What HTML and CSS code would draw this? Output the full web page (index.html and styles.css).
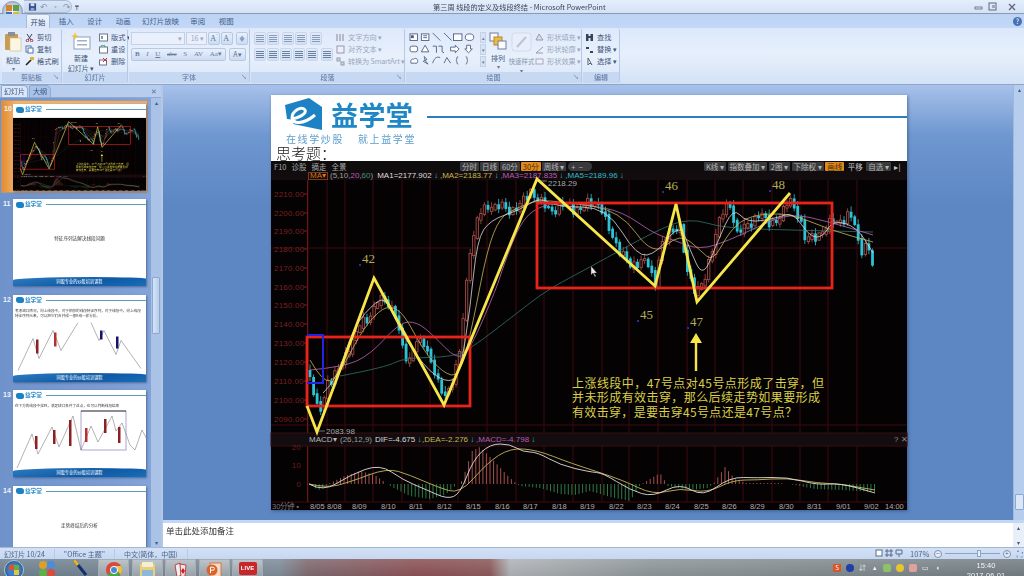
FILE: index.html
```html
<!DOCTYPE html>
<html lang="zh-CN">
<head>
  <meta charset="UTF-8" />
  <title>第三周 线段的定义及线段终结 - Microsoft PowerPoint</title>
  <link rel="stylesheet" href="styles.css">
</head>
<body>
  <div class="app">
    <!-- title bar -->
    <div class="titlebar">
      <div class="qat">
        <svg width="10" height="10" viewBox="0 0 10 10"><rect x="1" y="1" width="8" height="8" fill="#35508c"/><rect x="3" y="1" width="4" height="3" fill="#d8e4f4"/><rect x="3" y="6" width="4" height="3" fill="#8fa6cc"/></svg>
        <span class="qat-undo">↶</span><span class="qat-sep">·</span><span class="qat-undo">↷</span>
      </div>
      <span class="qat-more">₸</span>
      <div class="title-text">第三周 线段的定义及线段终结 - Microsoft PowerPoint</div>
      <div class="win-btns">
        <svg width="46" height="10" viewBox="0 0 46 10"><rect x="1" y="5" width="7" height="2" fill="none" stroke="#667" stroke-width=".8"/><rect x="15" y="1" width="7" height="7" fill="none" stroke="#667"/><rect x="18" y="3" width="3" height="3" fill="#9ab"/><path d="M35 2l6 6M41 2l-6 6" stroke="#667" stroke-width="1.4"/></svg>
      </div>
    </div>
    <div class="office-btn">
      <svg width="15" height="15" viewBox="0 0 15 15"><rect x="1" y="1" width="6" height="6" fill="#d9822b"/><rect x="8" y="1" width="6" height="6" fill="#5ca14a"/><rect x="1" y="8" width="6" height="6" fill="#3f73b8"/><rect x="8" y="8" width="6" height="6" fill="#e0b93a"/></svg>
    </div>

    <!-- ribbon tabs -->
    <div class="tabs">
      <span class="tab tab-active">开始</span>
      <span class="tab">插入</span>
      <span class="tab">设计</span>
      <span class="tab">动画</span>
      <span class="tab tab-wide">幻灯片放映</span>
      <span class="tab">审阅</span>
      <span class="tab">视图</span>
      <span class="help">?</span>
    </div>

    <!-- ribbon -->
    <div class="ribbon">
      <div class="grp grp-clip">
        <div class="grp-body">
          <div class="big-btn">
            <svg width="18" height="20" viewBox="0 0 18 20"><rect x="1" y="2" width="13" height="16" rx="1" fill="#c89a52"/><rect x="4" y="0" width="7" height="4" fill="#8b8f98"/><rect x="6" y="6" width="11" height="13" fill="#fbf6e2" stroke="#c9b988" stroke-width=".6"/></svg>
            <span>粘贴</span><i>▾</i>
          </div>
          <div class="small-col">
            <span class="small-btn"><svg width="9" height="9" viewBox="0 0 9 9"><path d="M2 1l4 6M7 1L3 7" stroke="#345" fill="none"/><circle cx="2.4" cy="7.6" r="1.2" fill="none" stroke="#a33"/><circle cx="6.6" cy="7.6" r="1.2" fill="none" stroke="#a33"/></svg>剪切</span>
            <span class="small-btn"><svg width="9" height="9" viewBox="0 0 9 9"><rect x="1" y="1" width="5" height="6" fill="#fff" stroke="#57a"/><rect x="3" y="3" width="5" height="5" fill="#fff" stroke="#57a"/></svg>复制</span>
            <span class="small-btn"><svg width="9" height="9" viewBox="0 0 9 9"><path d="M1 8l5-5" stroke="#222" stroke-width="1.6"/><rect x="5" y="0" width="4" height="3" fill="#e3b23c"/></svg>格式刷</span>
          </div>
        </div>
        <div class="grp-label">剪贴板<em>↘</em></div>
      </div>

      <div class="grp grp-slide">
        <div class="grp-body">
          <div class="big-btn big-new">
            <svg width="20" height="18" viewBox="0 0 20 18"><rect x="3" y="5" width="16" height="12" fill="#fff" stroke="#8aa0bf"/><rect x="6" y="8" width="10" height="1.5" fill="#9fb1c9"/><rect x="6" y="12" width="10" height="1.5" fill="#9fb1c9"/><path d="M4 0l1 3 3 1-3 1-1 3-1-3-3-1 3-1z" fill="#eec43a"/></svg>
            <span>新建<br>幻灯片 ▾</span>
          </div>
          <div class="small-col">
            <span class="small-btn"><svg width="9" height="9" viewBox="0 0 9 9"><rect x=".5" y="1" width="8" height="7" fill="#fff" stroke="#678"/><rect x="2" y="3" width="2" height="3" fill="#89a"/></svg>版式 ▾</span>
            <span class="small-btn"><svg width="9" height="9" viewBox="0 0 9 9"><rect x=".5" y="2" width="8" height="6" fill="#fff" stroke="#678"/><path d="M2 2a2 2 0 014 0" stroke="#397" fill="none"/></svg>重设</span>
            <span class="small-btn"><svg width="9" height="9" viewBox="0 0 9 9"><rect x=".5" y="3" width="7" height="5" fill="#fff" stroke="#678"/><path d="M4 1l4 4M8 1L4 5" stroke="#c33"/></svg>删除</span>
          </div>
        </div>
        <div class="grp-label">幻灯片</div>
      </div>

      <div class="grp grp-font">
        <div class="grp-body grp-stack">
          <div class="tool-row">
            <span class="combo combo-name">▾</span><span class="combo combo-size">16 ▾</span>
            <span class="chip chip-serif">A<sup>ˆ</sup></span><span class="chip chip-serif">A<sup>ˇ</sup></span>
            <span class="chip chip-pen">♦</span>
          </div>
          <div class="tool-row">
            <span class="strip strip-font"><b>B</b><i>I</i><u>U</u><s>abc</s><span>S</span><span>AV</span><span>Aa▾</span></span>
            <span class="chip chip-color">A▾</span>
          </div>
        </div>
        <div class="grp-label">字体<em>↘</em></div>
      </div>

      <div class="grp grp-para">
        <div class="grp-body para-body">
          <div class="grp-stack">
            <div class="tool-row">
              <span class="chip chip-lines"></span><span class="chip chip-lines"></span>
              <span class="chip chip-lines chip-gap"></span><span class="chip chip-lines"></span>
              <span class="chip chip-lines chip-gap"></span>
            </div>
            <div class="tool-row">
              <span class="chip chip-lines chip-dark"></span><span class="chip chip-lines chip-dark"></span><span class="chip chip-lines chip-dark"></span><span class="chip chip-lines chip-dark"></span><span class="chip chip-lines chip-dark"></span>
              <span class="chip chip-lines chip-dark chip-gap"></span>
            </div>
          </div>
          <div class="small-col small-grey">
            <span class="small-btn"><svg width="9" height="9" viewBox="0 0 9 9"><path d="M1 1v7M4 1v7M7 1v7" stroke="#889" /></svg>文字方向 ▾</span>
            <span class="small-btn"><svg width="9" height="9" viewBox="0 0 9 9"><rect x="1" y="1" width="7" height="7" fill="#eef" stroke="#99a"/></svg>对齐文本 ▾</span>
            <span class="small-btn small-tight"><svg width="9" height="9" viewBox="0 0 9 9"><rect x="1" y="1" width="3" height="3" fill="#cdd" stroke="#99a"/><rect x="5" y="5" width="3" height="3" fill="#cdd" stroke="#99a"/></svg>转换为 SmartArt ▾</span>
          </div>
        </div>
        <div class="grp-label">段落<em>↘</em></div>
      </div>

      <div class="grp grp-draw">
        <div class="grp-body draw-body">
          <svg class="shapes" width="70" height="34" viewBox="0 0 74 36" fill="#fdfdff" stroke="#46587a" stroke-width=".9">
            <rect x="1" y="2" width="8" height="7"/><rect x="2.5" y="4" width="2" height="2" fill="#46587a"/>
            <rect x="13" y="2" width="8" height="7"/><path d="M15 4h4M15 6h4"/>
            <path d="M25 1l8 8M37 1l8 8" fill="none"/><rect x="47" y="2" width="9" height="7"/><ellipse cx="64" cy="5.5" rx="4.5" ry="3.5"/>
            <rect x="1" y="15" width="8" height="6" rx="2"/><path d="M17 14l4 7h-8z"/><path d="M25 15h4v7M31 15h4v6l2 1" fill="none"/>
            <path d="M44 16h5v-2l4 4-4 4v-2h-5z"/><path d="M61 14h4v4h2l-4 4-4-4h2z"/>
            <path d="M2 33c-1-4 2-5 3-4 1-2 4-1 4 1 1 2-1 4-3 3z"/><path d="M16 26l3 3-2 1 3 4-5-3 2-1z" /><path d="M25 33c2-6 4-7 8-6M37 33l3-6 4 6" fill="none"/><path d="M52 26c-2 0-1 3-2 4 1 1 0 4 2 4M60 26c2 0 1 3 2 4-1 1 0 4-2 4" fill="none"/>
          </svg>
          <div class="gallery-arrows"><i>▴</i><i>▾</i><i>▾</i></div>
          <div class="big-btn big-arrange">
            <svg width="18" height="18" viewBox="0 0 18 18"><rect x="1" y="1" width="8" height="8" fill="#fbfbff" stroke="#6f7f99"/><rect x="5" y="5" width="8" height="8" fill="#eebb3f" stroke="#b28a2a"/><rect x="9" y="9" width="8" height="8" fill="#fbfbff" stroke="#6f7f99"/></svg>
            <span>排列</span><i>▾</i>
          </div>
          <div class="big-btn big-quick">
            <svg width="22" height="20" viewBox="0 0 22 20"><rect x="1" y="1" width="19" height="18" rx="3" fill="#e8eefa" stroke="#d2dbeb"/><path d="M6 15L15 5" stroke="#b8c4d8" stroke-width="2"/></svg>
            <span>快速样式</span><i>▾</i>
          </div>
          <div class="small-col small-grey">
            <span class="small-btn"><svg width="9" height="9" viewBox="0 0 9 9"><path d="M1 7l3-6 4 6z" fill="#dde" stroke="#99a"/></svg>形状填充 ▾</span>
            <span class="small-btn"><svg width="9" height="9" viewBox="0 0 9 9"><path d="M1 8L8 2M1 8h7" stroke="#99a" fill="none"/></svg>形状轮廓 ▾</span>
            <span class="small-btn"><svg width="9" height="9" viewBox="0 0 9 9"><rect x="1" y="2" width="7" height="5" fill="#eef" stroke="#aab"/></svg>形状效果 ▾</span>
          </div>
        </div>
        <div class="grp-label">绘图<em>↘</em></div>
      </div>

      <div class="grp grp-edit">
        <div class="grp-body">
          <div class="small-col">
            <span class="small-btn"><svg width="9" height="9" viewBox="0 0 9 9"><rect x="1" y="1" width="2.5" height="7" fill="#345"/><rect x="5.5" y="1" width="2.5" height="7" fill="#345"/><rect x="3" y="3" width="3" height="2" fill="#345"/></svg>查找</span>
            <span class="small-btn"><svg width="9" height="9" viewBox="0 0 9 9"><path d="M1 3h3M5 7h3" stroke="#345" stroke-width="2"/></svg>替换 ▾</span>
            <span class="small-btn"><svg width="9" height="9" viewBox="0 0 9 9"><path d="M3 1v7l2-2 2 2z" fill="#fff" stroke="#567"/></svg>选择 ▾</span>
          </div>
        </div>
        <div class="grp-label">编辑</div>
      </div>
      <div class="grp-rest"></div>
    </div>

    <!-- slide panel + stage -->
    <div class="workspace">
      <div class="side">
        <div class="side-tabs">
          <span class="side-tab side-tab-on">幻灯片</span>
          <span class="side-tab">大纲</span>
          <span class="side-close">✕</span>
        </div>
        <div class="side-body">
          <div class="thumbs">
            <div class="thumb-row thumb-on">
              <span class="thumb-no">10</span>
              <div class="thumb">
                <svg class="thumb-art" viewBox="271 95 636 415">
                  <rect x="271" y="161" width="636" height="349" fill="#050203"/>
                  <use href="#chart-art"/>
                </svg>
                <div class="mini-head"><span class="mini-mark"></span><span class="mini-name">益学堂</span><span class="mini-line"></span></div>
              </div>
            </div>
            <div class="thumb-row">
              <span class="thumb-no">11</span>
              <div class="thumb">
                <div class="mini-head"><span class="mini-mark"></span><span class="mini-name">益学堂</span><span class="mini-line"></span></div>
                <div class="mini-center">特征序列法解决线段问题</div>
                <div class="mini-foot">同股专业的炒股培训课程</div>
              </div>
            </div>
            <div class="thumb-row">
              <span class="thumb-no">12</span>
              <div class="thumb">
                <div class="mini-head"><span class="mini-mark"></span><span class="mini-name">益学堂</span><span class="mini-line"></span></div>
                <div class="mini-text">考虑缺口情况，向上线段中，对于相邻的线段特征序列，对于线段中，向上线段特征序列元素，可以把它们合并成一根K线一样分析。</div>
                <svg class="mini-draw" viewBox="0 0 133 50" fill="none" stroke="#666" stroke-width=".5">
                  <path d="M5 50L20 18l6 20 14-28 8 20 17-28"/>
                  <path d="M78 2l8 18 5-10 12 24 5-14 20 28"/>
                  <rect x="23" y="19" width="2.5" height="14" fill="#8e2020" stroke="none"/>
                  <rect x="41" y="12" width="2.5" height="14" fill="#b73030" stroke="none"/>
                  <rect x="87" y="10" width="2.5" height="9" fill="#141470" stroke="none"/>
                  <rect x="103" y="16" width="2.5" height="12" fill="#141470" stroke="none"/>
                </svg>
                <div class="mini-foot">同股专业的炒股培训课程</div>
              </div>
            </div>
            <div class="thumb-row">
              <span class="thumb-no">13</span>
              <div class="thumb">
                <div class="mini-head"><span class="mini-mark"></span><span class="mini-name">益学堂</span><span class="mini-line"></span></div>
                <div class="mini-text">在下方的线段中找到，满足缺口条件了这点，也可以判断线段结束</div>
                <svg class="mini-draw" viewBox="0 0 133 60" fill="none" stroke="#666" stroke-width=".5">
                  <path d="M4 60L19 26l6 20 14-27 7 20 14-31 8 34 10-24 7 16 14-26 4 15 6-8 8 22 5 5 7-20 15 28"/>
                  <rect x="22" y="28" width="2.5" height="13" fill="#8e2020" stroke="none"/>
                  <rect x="40" y="22" width="2.5" height="14" fill="#8e2020" stroke="none"/>
                  <rect x="56" y="12" width="2.5" height="26" fill="#8e2020" stroke="none"/>
                  <rect x="72" y="20" width="2.5" height="14" fill="#b73030" stroke="none"/>
                  <rect x="91" y="11" width="2.5" height="14" fill="#8e2020" stroke="none"/>
                  <rect x="105" y="19" width="2.5" height="16" fill="#8e2020" stroke="none"/>
                  <rect x="68" y="3" width="45" height="39" stroke="#7468b0" stroke-width=".6"/>
                  <path d="M68 3h45" stroke="#222" stroke-width=".8"/>
                </svg>
                <div class="mini-foot">同股专业的炒股培训课程</div>
              </div>
            </div>
            <div class="thumb-row">
              <span class="thumb-no">14</span>
              <div class="thumb">
                <div class="mini-head"><span class="mini-mark"></span><span class="mini-name">益学堂</span><span class="mini-line"></span></div>
                <div class="mini-center">走势终结后的分析</div>
              </div>
            </div>
          </div>
          <div class="vscroll side-scroll">
            <span class="sb-arrow">▴</span>
            <span class="sb-thumb"></span>
            <span class="sb-arrow">▾</span>
          </div>
        </div>
      </div>

      <div class="main">
        <div class="stage-row">
          <div class="stage">
            <div class="slide">
              <div class="slide-head">
                <div class="brand">
                  <div class="brand-top">
                    <svg class="brand-mark" width="38" height="33" viewBox="0 0 38 33">
                      <path d="M0 7L24 0 37 9V32L8 26 11 22 2 21z" fill="#1d82c4"/>
                      <path d="M7 21C13 20 22 16 20 12 17 7 7 13 7 20 7 26 18 27 30 17" fill="none" stroke="#fff" stroke-width="3"/>
                    </svg>
                    <span class="brand-name">益学堂</span>
                  </div>
                  <div class="brand-tag">在线学炒股<span class="brand-gap"></span>就上益学堂</div>
                </div>
                <div class="brand-line"></div>
                <div class="slide-q">思考题：</div>
              </div>
              <div class="chart">
                <div class="chart-bar">
                  <div class="bar-left"><span>F10</span><span>诊股</span><span>摘走</span><span>全景</span></div>
                  <div class="bar-mid">
                    <span class="pill">分时</span><span class="pill">日线</span><span class="pill">60分</span><span class="pill pill-on">30分</span><span class="pill">周线 ▾</span><span class="pill pill-round">+ &nbsp;−</span>
                  </div>
                  <div class="bar-right">
                    <span class="pill">K线 ▾</span><span class="pill">指数叠加 ▾</span><span class="pill">2图 ▾</span><span class="pill">下除权 ▾</span><span class="pill pill-on">画线</span><span class="pill pill-plain">平移</span><span class="pill">自选 ▾</span><span class="pill pill-plain">▸|</span>
                  </div>
                </div>
                <div class="chart-legend">
                  <span class="ma-tag">MA▾</span>
                  <span class="lg-grey">(5,10,<b class="lg-pink">20</b>,<b class="lg-green">60</b>)</span>
                  <span class="lg-white">MA1=2177.902 <b class="lg-cyan">↓</b></span>
                  <span class="lg-yellow">,MA2=2183.77 <b class="lg-cyan">↓</b></span>
                  <span class="lg-pink">,MA3=2187.835 <b class="lg-cyan">↓</b></span>
                  <span class="lg-cyan">,MA5=2189.96 ↓</span>
                </div>
                <svg class="chart-svg" width="636" height="330" viewBox="271 180 636 330">
                  <g id="chart-art"></g>
                </svg>
              </div>
            </div>
          </div>
          <div class="vscroll main-scroll">
            <span class="sb-arrow">▴</span>
            <span class="sb-thumb sb-thumb-main"></span>
          </div>
        </div>
        <div class="notes-row">
          <div class="notes">单击此处添加备注</div>
          <div class="vscroll notes-scroll"><span class="sb-arrow">▴</span><span class="sb-arrow">▾</span></div>
        </div>
      </div>
    </div>

    <!-- status bar -->
    <div class="statusbar">
      <span class="st-cell">幻灯片 10/24</span>
      <span class="st-cell st-theme">"Office 主题"</span>
      <span class="st-cell">中文(简体，中国)</span>
      <div class="st-right">
        <span class="view-btns">
          <svg width="28" height="9" viewBox="0 0 28 9" fill="none" stroke="#5a6c8c"><rect x="1" y="1" width="6" height="6" fill="#fff"/><path d="M11 1h2v2h-2zM15 1h2v2h-2zM11 5h2v2h-2zM15 5h2v2h-2z"/><path d="M21 1h6v4h-6zM24 5v3"/></svg>
        </span>
        <span class="st-zoom">107%</span>
        <span class="zoom-circle">−</span>
        <span class="zoom-track"><i></i></span>
        <span class="zoom-circle">+</span>
        <span class="st-fit">⛶</span>
      </div>
    </div>

    <!-- taskbar -->
    <div class="taskbar">
      <span class="start-orb"><i></i></span>
      <svg class="tb-app" width="20" height="18" viewBox="0 0 20 18"><circle cx="6" cy="5" r="4" fill="#d9a02d"/><circle cx="14" cy="5" r="4" fill="#4b8dd8"/><circle cx="6" cy="13" r="4" fill="#5fb04b"/><circle cx="14" cy="13" r="4" fill="#d84b3f"/></svg>
      <svg class="tb-app tb-pen" width="18" height="18" viewBox="0 0 18 18"><path d="M2 0l12 15" stroke="#15306f" stroke-width="3"/><path d="M2 0l4 5" stroke="#e2b52d" stroke-width="3"/></svg>
      <span class="tb-btn"><svg width="16" height="16" viewBox="0 0 16 16"><circle cx="8" cy="8" r="8" fill="#d8493c"/><path d="M8 8L1.5 12.5A8 8 0 008 16z" fill="#4ca64a"/><path d="M8 8l6.5 4.5A8 8 0 0016 8 8 8 0 0015 4H8z" fill="#edc23c"/><path d="M8 16l6.5-3.5L11 8H5z" fill="#4ca64a"/><circle cx="8" cy="8" r="3.6" fill="#4b86d8" stroke="#fff"/></svg></span>
      <span class="tb-btn"><svg width="17" height="16" viewBox="0 0 17 16"><rect x="1" y="2" width="15" height="14" fill="#e8cf7c"/><rect x="3" y="0" width="11" height="5" fill="#f5efd2"/><rect x="3" y="8" width="11" height="6" fill="#8fb7d6"/></svg></span>
      <span class="tb-btn"><svg width="16" height="16" viewBox="0 0 16 16"><path d="M2 3l5-2 2 12-5 2z" fill="#eee" stroke="#b44"/><path d="M7 2l6 1-1 11-4 1z" fill="#f4e6e6" stroke="#b44"/><path d="M10 6l2 3-2 3-2-3z" fill="#c22"/></svg></span>
      <span class="tb-btn"><svg width="16" height="16" viewBox="0 0 16 16"><rect x="4" y="1" width="11" height="14" fill="#f6d9c4" stroke="#d07a48"/><circle cx="6" cy="8" r="5.5" fill="#d9652c"/><path d="M4.500 11V5.200h2.400a1.400 1.400 0 010 3H4.500" stroke="#fff" fill="none"/></svg></span>
      <span class="tb-btn"><span class="live-ico">LIVE</span></span>
      <div class="tray">
        <span class="tray-s">S</span>
        <span class="tray-dot"></span>
        <span class="tray-mini">⇵</span>
        <span class="tray-mini">▴</span>
        <span class="tray-sq tray-green"></span>
        <span class="tray-sq tray-yellow"></span>
        <span class="tray-sq tray-red"></span>
        <span class="tray-mini">▭</span>
        <span class="tray-mini">◖</span>
        <span class="clock">15:40<br>2017-06-01</span>
      </div>
    </div>
  </div>
  <script src="chart.js"></script>
</body>
</html>
```

FILE: styles.css
```css
* {
  box-sizing: border-box;
}
html, body {
  margin: 0;
  padding: 0;
  width: 1024px;
  height: 576px;
  overflow: hidden;
}
body {
  font-family: "Noto Sans CJK SC", "Liberation Sans", sans-serif;
  font-size: 8px;
  color: #3d5478;
}
.app {
  position: relative;
  width: 1024px;
  height: 576px;
  display: flex;
  flex-direction: column;
  filter: blur(0.45px);
}

/* title bar */
.titlebar {
  height: 14px;
  flex: none;
  display: flex;
  align-items: center;
  background: linear-gradient(#e4eefc, #d3e2f8);
  border-bottom: 1px solid #8c9bab;
  position: relative;
  padding-left: 24px;
}
.qat {
  width: 48px;
  height: 13px;
  display: flex;
  align-items: center;
  gap: 3px;
  padding-left: 4px;
  background: linear-gradient(#dbe7f8, #c6d7ef);
  border: 1px solid #a9bbd4;
  border-left: none;
  border-radius: 0 8px 8px 0;
  color: #8796ad;
  font-size: 9px;
}
.qat-sep {
  color: #a6b2c4;
}
.qat-more {
  margin-left: 3px;
  font-size: 7px;
  color: #445;
}
.title-text {
  position: absolute;
  left: 433px;
  top: 1px;
  font-size: 7.2px;
  line-height: 12px;
  color: #3c4350;
  white-space: nowrap;
}
.win-btns {
  margin-left: auto;
  margin-right: 4px;
  display: flex;
}
.office-btn {
  position: absolute;
  left: 2px;
  top: 1px;
  width: 21px;
  height: 21px;
  border-radius: 50%;
  background: radial-gradient(#f4f7fc, #aebed6 70%, #7d8fa9);
  border: 1px solid #8898b0;
  display: flex;
  align-items: center;
  justify-content: center;
}

/* tabs */
.tabs {
  height: 14px;
  flex: none;
  display: flex;
  align-items: flex-end;
  padding-left: 26px;
  background: linear-gradient(#bcd3f4, #c3d8f7);
  position: relative;
}
.tab {
  width: 28.5px;
  height: 14px;
  line-height: 13px;
  text-align: center;
  font-size: 7.4px;
  color: #3f5a85;
}
.tab-active {
  width: 24px;
  margin-right: 2px;
  background: linear-gradient(#eef4fd, #dbe7f9);
  border: 1px solid #a8bcd8;
  border-bottom: none;
  border-radius: 2px 2px 0 0;
  color: #30486e;
}
.tab-wide {
  width: 46px;
}
.help {
  position: absolute;
  right: 2px;
  top: 3px;
  width: 9px;
  height: 9px;
  border-radius: 50%;
  background: #4572b4;
  color: #fff;
  font-size: 7px;
  line-height: 9px;
  text-align: center;
}

/* ribbon */
.ribbon {
  height: 57px;
  flex: none;
  display: flex;
  gap: 1px;
  padding: 1px 2px 1px 2px;
  background: linear-gradient(#dbe8fb, #e7effc 45%, #d4e2f6);
  border-bottom: 1px solid #8ea6c9;
}
.grp {
  display: flex;
  flex-direction: column;
  flex: none;
  border-right: 1px solid #b5c9e6;
  border-radius: 2px;
  background: linear-gradient(#dfe9fb, #e8f0fc 50%, #d8e5f8);
}
.grp-clip { width: 60px; }
.grp-slide { width: 65px; }
.grp-font { width: 121px; }
.grp-para { width: 154px; }
.grp-draw { width: 176px; }
.grp-edit { width: 37px; }
.grp-rest { flex: 1; }
.grp-body {
  flex: 1;
  display: flex;
  align-items: flex-start;
  gap: 3px;
  padding: 3px 2px 0;
  min-height: 0;
}
.grp-stack {
  flex-direction: column;
  gap: 3px;
  display: flex;
}
.grp-label {
  height: 11px;
  flex: none;
  position: relative;
  text-align: center;
  line-height: 10px;
  font-size: 7px;
  color: #58749c;
  background: #c6d8f2;
}
.grp-label em {
  position: absolute;
  right: 2px;
  top: 0;
  font-style: normal;
  font-size: 6px;
  color: #7d92b1;
}
.big-btn {
  display: flex;
  flex-direction: column;
  align-items: center;
  font-size: 7px;
  line-height: 10px;
  color: #3d5478;
  flex: none;
}
.big-btn span {
  margin-top: 3px;
  text-align: center;
}
.big-btn i {
  font-style: normal;
  font-size: 6px;
  line-height: 8px;
  color: #778;
}
.big-new {
  width: 30px;
  margin-left: 1px;
}
.small-col {
  display: flex;
  flex-direction: column;
  gap: 2.5px;
  padding-top: 1px;
}
.small-btn {
  display: flex;
  align-items: center;
  gap: 3px;
  height: 9.5px;
  font-size: 7.2px;
  line-height: 9px;
  white-space: nowrap;
  color: #3d5478;
}
.small-grey .small-btn {
  color: #99a7bb;
}
.small-tight {
  letter-spacing: -.15px;
}
.tool-row {
  display: flex;
  gap: 1px;
  height: 13px;
  align-items: stretch;
}
.combo {
  background: #eaf0fb;
  border: 1px solid #c3d2e8;
  font-size: 7px;
  line-height: 11px;
  text-align: right;
  padding-right: 2px;
  color: #9aa9bf;
}
.combo-name { width: 54px; }
.combo-size { width: 21px; }
.chip {
  min-width: 12px;
  background: linear-gradient(#e8f0fc, #cddcf3);
  border: 1px solid #b6c8e2;
  border-radius: 2px;
  font-size: 7px;
  line-height: 11px;
  text-align: center;
  color: #5d7190;
}
.chip-serif {
  font-family: "Liberation Serif", serif;
  font-size: 8px;
}
.chip-serif sup {
  font-size: 5px;
  line-height: 0;
}
.chip-pen {
  margin-left: 2px;
  color: #8aa0c0;
}
.chip-color {
  width: 17px;
  margin-left: 2px;
}
.strip {
  flex: 1;
  width: 95px;
  display: flex;
  justify-content: space-between;
  padding: 0 3px;
  background: linear-gradient(#e8f0fc, #cddcf3);
  border: 1px solid #b6c8e2;
  border-radius: 2px;
  font-family: "Liberation Serif", serif;
  font-size: 7px;
  line-height: 11px;
  color: #6a7d9a;
}
.para-body {
  gap: 3px;
  padding-left: 3px;
}
.chip-lines {
  width: 12px;
  background:
    repeating-linear-gradient(#8a9cb8 0 1px, transparent 1px 2px) center / 8px 7px no-repeat,
    linear-gradient(#e2ebfa, #d2dff4);
  border-color: #c7d6ec;
}
.chip-gap {
  margin-left: 2px;
}
.chip-dark {
  background:
    repeating-linear-gradient(#6b7f9e 0 1px, transparent 1px 2px) center / 8px 7px no-repeat,
    linear-gradient(#e2ebfa, #d2dff4);
}
.draw-body {
  gap: 1px;
}
.shapes {
  flex: none;
  margin-left: 1px;
}
.gallery-arrows {
  width: 6px;
  flex: none;
  display: flex;
  flex-direction: column;
  gap: 1px;
}
.gallery-arrows i {
  height: 11px;
  font-style: normal;
  font-size: 5px;
  line-height: 9px;
  text-align: center;
  color: #778;
  background: #d6e2f6;
  border: 1px solid #c3d2e8;
}
.big-arrange {
  width: 20px;
  margin-left: 1px;
  color: #44597c;
}
.big-quick {
  width: 25px;
  font-size: 6.4px;
  color: #8896ab;
  white-space: nowrap;
}
.big-quick span {
  margin-top: 5px;
}

/* slide panel */
.workspace {
  height: 462px;
  flex: none;
  display: flex;
  background: linear-gradient(#a7c1ea, #6f97d0 50px, #5c87c3 120px);
}
.side {
  width: 163px;
  flex: none;
  display: flex;
  flex-direction: column;
  border-right: 2px solid #b4c8e6;
}
.side-tabs {
  height: 13px;
  flex: none;
  display: flex;
  align-items: flex-end;
  padding-left: 1px;
  background: #b8cdee;
  border-bottom: 1px solid #8fa9d2;
  position: relative;
}
.side-tab {
  width: 22px;
  height: 12px;
  line-height: 11px;
  font-size: 7px;
  text-align: center;
  color: #35507c;
  background: #a9c2e8;
  border: 1px solid #8fa9d2;
  border-bottom: none;
  border-radius: 2px 5px 0 0;
}
.side-tab-on {
  width: 27px;
  margin-right: 1px;
  background: #dce8fa;
}
.side-close {
  position: absolute;
  right: 4px;
  top: 2px;
  font-size: 7px;
  line-height: 9px;
  color: #5b6f90;
}
.side-body {
  flex: 1;
  display: flex;
  min-height: 0;
  background: linear-gradient(90deg, #6f92ca, #7c9ed5 70%, #85a6da);
}
.thumbs {
  flex: 1;
  min-width: 0;
  display: flex;
  flex-direction: column;
  gap: 4px;
  padding: 2px 0 0 1px;
  overflow: hidden;
}
.thumb-row {
  display: flex;
  align-items: flex-start;
  flex: none;
  padding: 3px 2px 2px 1px;
  height: 92px;
}
.thumb-row:nth-child(2) { margin-top: -1px; }
.thumb-row:nth-child(3), .thumb-row:nth-child(4), .thumb-row:nth-child(5) { margin-top: -.5px; }
.thumb-on {
  height: 93px;
  width: 147px;
  background: linear-gradient(90deg, #e58c2e, #f0b474 10%, #d9b08a);
  border: 1px solid #b79876;
}
.thumb-no {
  width: 11px;
  flex: none;
  font-size: 7px;
  font-weight: bold;
  line-height: 10px;
  color: #eef3fb;
  text-align: left;
  padding-left: 1px;
  font-family: "Liberation Sans", sans-serif;
}
.thumb-on .thumb-no {
  width: 10px;
}
.thumb {
  position: relative;
  width: 133px;
  height: 87px;
  flex: none;
  background: #fff;
  display: flex;
  flex-direction: column;
  box-shadow: 1px 1px 2px rgba(30, 50, 90, .5);
  overflow: hidden;
}
.thumb-art {
  position: absolute;
  inset: 0;
  width: 133px;
  height: 87px;
}
.mini-head {
  position: relative;
  height: 13px;
  flex: none;
  display: flex;
  align-items: center;
  padding: 0 0 2px 3px;
  gap: 1px;
}
.mini-mark {
  width: 8px;
  height: 6px;
  border-radius: 2px 3px;
  background: #1d82c4;
}
.mini-name {
  font-size: 5.6px;
  line-height: 7px;
  font-weight: bold;
  color: #2a8aca;
}
.mini-line {
  flex: 1;
  height: 1px;
  margin-left: 3px;
  background: #5f9cb8;
}
.mini-center {
  flex: 1;
  text-align: center;
  font-size: 4.6px;
  line-height: 52px;
  color: #333;
}
.mini-foot {
  height: 9px;
  flex: none;
  margin-top: auto;
  text-align: center;
  font-size: 4.2px;
  line-height: 9px;
  color: #fff;
  background: linear-gradient(170deg, #2e7cbf, #0e5aa6 60%, #1a6eb8);
  border-radius: 60% 40% 0 0 / 35% 20% 0 0;
}
.mini-text {
  flex: none;
  padding: 0 2px;
  font-size: 3.6px;
  line-height: 5px;
  color: #444;
}
.mini-draw {
  flex: 1;
  min-height: 0;
  width: 133px;
}
.vscroll {
  flex: none;
  display: flex;
  flex-direction: column;
  justify-content: space-between;
  background: #a9c2e6;
}
.side-scroll {
  width: 10px;
  margin-right: 0;
  padding-top: 0;
}
.sb-arrow {
  height: 9px;
  font-size: 6px;
  line-height: 9px;
  text-align: center;
  color: #42597f;
}
.sb-thumb {
  width: 8px;
  height: 57px;
  margin: 170px 1px auto;
  background: linear-gradient(90deg, #d6e4f8, #b7cdea);
  border: 1px solid #8da8cf;
  border-radius: 1px;
}
.main {
  flex: 1;
  min-width: 0;
  display: flex;
  flex-direction: column;
}
.stage-row {
  height: 435px;
  flex: none;
  display: flex;
}
.stage {
  flex: 1;
  min-width: 0;
  display: flex;
  justify-content: center;
  padding-top: 10px;
  padding-left: 2px;
}
.main-scroll {
  width: 11px;
  background: #b6cdee;
  border-left: 1px solid #9fb7da;
}
.sb-thumb-main {
  width: 9px;
  height: 16px;
  margin: auto 1px 10px;
  background: #dbe7f8;
}

/* slide */
.slide {
  width: 636px;
  height: 415px;
  background: #fff;
  display: flex;
  flex-direction: column;
  box-shadow: 1px 1px 3px rgba(30, 50, 90, .5);
}
.slide-head {
  height: 66px;
  flex: none;
  position: relative;
  padding: 3px 0 0 14px;
}
.brand-top {
  display: flex;
  align-items: center;
  gap: 8px;
  height: 33px;
}
.brand-name {
  font-size: 27px;
  font-weight: bold;
  line-height: 33px;
  color: #1f87c6;
  letter-spacing: .4px;
}
.brand-tag {
  margin: 2px 0 0 1px;
  font-size: 10px;
  line-height: 12px;
  color: #5b9ccd;
  letter-spacing: 1.6px;
  white-space: nowrap;
}
.brand-gap {
  display: inline-block;
  width: 14px;
}
.brand-line {
  position: absolute;
  left: 156px;
  right: 0;
  top: 21px;
  height: 2px;
  background: #2c7fbe;
}
.slide-q {
  position: absolute;
  left: 5px;
  top: 50px;
  font-family: "Noto Sans CJK TC", "Liberation Sans", sans-serif;
  font-weight: 300;
  font-size: 15px;
  line-height: 15px;
  color: #222;
  white-space: nowrap;
}

/* chart */
.chart {
  flex: 1;
  min-height: 0;
  background: #050203;
  display: flex;
  flex-direction: column;
}
.chart-bar {
  height: 11px;
  flex: none;
  display: flex;
  align-items: center;
  background: #0f0c0e;
  font-size: 7.5px;
  line-height: 10px;
  color: #a8a8a8;
  white-space: nowrap;
}
.bar-left {
  display: flex;
  flex: none;
  gap: 5px;
  padding-left: 3px;
  width: 189px;
}
.bar-mid {
  display: flex;
  flex: none;
  gap: 1px;
  width: 244px;
}
.bar-right {
  display: flex;
  flex: none;
  gap: 1.5px;
}
.pill {
  padding: 0 2px;
  height: 9px;
  line-height: 9px;
  background: #3a3a3c;
  border-radius: 1px;
  color: #b5b5b5;
}
.pill-on {
  background: #e08a1e;
  color: #4a2a05;
}
.pill-round {
  border-radius: 5px;
  width: 24px;
  padding: 0 3px;
  margin-left: 1px;
}
.pill-plain {
  background: none;
  color: #c8c8c8;
}
.chart-legend {
  height: 8px;
  flex: none;
  display: flex;
  align-items: center;
  gap: 2px;
  padding-left: 37px;
  font-family: "Liberation Sans", sans-serif;
  font-size: 8px;
  line-height: 8px;
  white-space: nowrap;
  background: #120c0e;
}
.chart-legend b {
  font-weight: normal;
}
.ma-tag {
  color: #d6761c;
  border: 1px solid #7e3a12;
  padding: 0 1px;
  height: 8px;
  line-height: 6px;
}
.lg-grey { color: #9c9c9c; margin-right: 2px; }
.lg-white { color: #dcdcdc; }
.lg-yellow { color: #c9b84c; }
.lg-pink { color: #b95cb5; }
.lg-green { color: #3e8c78; }
.lg-cyan { color: #31bccb; }
.chart-svg {
  display: block;
  flex: none;
  overflow: visible;
}

/* notes */
.notes-row {
  height: 27px;
  flex: none;
  display: flex;
  padding-top: 3px;
  background: #c3d6f3;
}
.notes {
  flex: 1;
  background: #fff;
  padding: 1px 0 0 3px;
  font-size: 8.500px;
  line-height: 13px;
  color: #333;
}
.notes-scroll {
  width: 11px;
  background: #e8eff9;
}

/* status bar */
.statusbar {
  height: 12px;
  flex: none;
  display: flex;
  align-items: center;
  padding-left: 4px;
  background: linear-gradient(#d3e1f6, #c6d7f1);
  border-top: 1px solid #a3b6d4;
  font-size: 7px;
  color: #4e6488;
}
.st-cell {
  padding-right: 9px;
  margin-right: 9px;
  border-right: 1px solid #b8c9e2;
  line-height: 10px;
}
.st-cell:last-of-type {
  margin-right: 0;
}
.st-right {
  margin-left: auto;
  display: flex;
  align-items: center;
  height: 12px;
  padding-right: 1px;
  gap: 3px;
}
.view-btns {
  display: flex;
  width: 30px;
}
.st-zoom {
  width: 21px;
  margin-left: 2px;
  font-size: 7.5px;
}
.zoom-circle {
  width: 8px;
  height: 8px;
  border: 1px solid #7d90ad;
  border-radius: 50%;
  background: #e7eefa;
  line-height: 5px;
  text-align: center;
  font-size: 7px;
}
.zoom-track {
  position: relative;
  width: 55px;
  height: 1px;
  background: #8ea3c2;
}
.zoom-track i {
  position: absolute;
  left: 32px;
  top: -3px;
  width: 4px;
  height: 7px;
  background: #e9f0fb;
  border: 1px solid #8ea3c2;
}
.st-fit {
  margin-left: 3px;
  font-size: 8px;
  line-height: 10px;
  color: #55688a;
}

/* taskbar */
.taskbar {
  height: 17px;
  flex: none;
  display: flex;
  align-items: flex-start;
  overflow: hidden;
  padding-left: 4px;
  background:
    linear-gradient(rgba(255,255,255,.12), rgba(0,0,0,.05)),
    linear-gradient(90deg, #6f8290 0, #808d9a 280px, #7f6a70 308px, #8d5256 420px, #8c5a5c 490px, #b0b4b8 510px, #8f979a 650px, #747f84 1024px);
}
.start-orb {
  width: 20px;
  height: 20px;
  margin-top: 1px;
  border-radius: 50%;
  flex: none;
  display: flex;
  align-items: center;
  justify-content: center;
  background: radial-gradient(#6aa6dc, #2a5d9c 75%);
  border: 1px solid #a9c3dd;
}
.start-orb i {
  width: 10px;
  height: 10px;
  background: conic-gradient(#5fae4a 0 25%, #e9c33f 0 50%, #3f7fd0 0 75%, #d9532f 0);
}
.tb-app {
  flex: none;
  margin: 1px 0 0 13px;
}
.tb-pen {
  margin-left: 15px;
  margin-right: 8px;
}
.tb-btn {
  width: 31px;
  height: 17px;
  flex: none;
  margin-right: 2.500px;
  display: flex;
  justify-content: center;
  padding-top: 2px;
  background: linear-gradient(#bcc3c9, #98a1a8);
  border: 1px solid #a5adb4;
  border-bottom: none;
}
.live-ico {
  width: 18px;
  height: 13px;
  background: #c8262a;
  border-radius: 2px;
  color: #fff;
  font-family: "Liberation Sans", sans-serif;
  font-size: 6px;
  font-weight: bold;
  line-height: 13px;
  text-align: center;
}
.tray {
  margin-left: auto;
  display: flex;
  align-items: center;
  gap: 5px;
  height: 17px;
  padding-right: 12px;
}
.tray span {
  flex: none;
}
.tray-s {
  width: 8px;
  height: 8px;
  background: #d9562b;
  color: #fff;
  font-size: 6px;
  line-height: 8px;
  text-align: center;
}
.tray-dot {
  width: 8px;
  height: 8px;
  border-radius: 50%;
  background: #1f3fa8;
}
.tray-mini {
  width: 7px;
  font-size: 7px;
  line-height: 9px;
  color: #eef1f3;
  text-align: center;
}
.tray-sq {
  width: 8px;
  height: 8px;
  border-radius: 2px;
}
.tray-green { background: #8fc06a; }
.tray-yellow { background: #e6c62e; border-radius: 50%; }
.tray-red { background: #e1a0a0; }
.tray .clock {
  width: 52px;
  margin-left: 14px;
  margin-top: 7px;
  font-family: "Liberation Sans", sans-serif;
  font-size: 7.500px;
  line-height: 10px;
  color: #f2f4f5;
  text-align: center;
}
```

FILE: chart.js
```js
// kline chart, coordinates are page pixels so they can be read off the screenshot
const art = document.getElementById('chart-art');
let out = '';

const closes = [[310,375],[317,405],[322,410],[328,380],[340,368],[350,345],[360,325],[370,315],[378,300],[385,300],[395,310],[402,345],[408,365],[415,340],[425,345],[432,360],[440,390],[447,395],[455,370],[460,350],[465,300],[470,250],[475,230],[478,215],[490,205],[500,205],[510,210],[520,205],[530,190],[540,200],[550,210],[560,205],[570,205],[580,210],[590,200],[600,205],[610,230],[620,250],[630,265],[640,260],[650,265],[655,285],[660,250],[670,230],[680,225],[687,270],[695,290],[705,280],[712,250],[720,215],[730,205],[737,230],[750,225],[760,210],[770,225],[780,215],[790,200],[800,215],[805,240],[815,235],[825,230],[832,220],[840,220],[850,215],[856,225],[860,250],[865,245],[870,255],[875,270]];
const maWhite = [[323,393],[337,380],[353,327],[377,300],[387,300],[403,337],[430,373],[450,383],[460,373],[470,310],[477,240],[490,220],[520,210],[540,197],[557,207],[607,207],[637,257],[657,253],[680,223],[690,250],[703,278],[717,243],[733,207],[747,223],[777,218],[793,212],[810,237],[823,237],[833,220],[857,227],[873,253]];
const maYellow = [[310,360],[323,383],[337,378],[357,340],[370,320],[387,305],[403,312],[423,350],[443,373],[460,377],[473,323],[487,250],[500,217],[517,208],[537,200],[563,202],[620,210],[653,257],[680,233],[700,250],[713,262],[730,230],[750,215],[790,213],[830,230],[873,242]];
const maPink = [[310,370],[343,367],[370,355],[400,322],[417,322],[433,335],[457,360],[470,350],[497,287],[503,267],[520,223],[537,207],[563,202],[590,205],[623,212],[653,233],[673,240],[700,250],[730,240],[757,227],[790,213],[830,222],[873,235]];
const maGreen = [[340,376],[387,367],[403,358],[453,357],[473,347],[517,313],[547,290],[590,267],[657,230],[690,218],[723,228],[790,230],[873,232]];
const dif = [[309,484],[323,492],[350,475],[380,464],[403,480],[427,490],[447,499],[460,494],[473,460],[490,444],[510,444],[523,452],[537,452],[560,465],[590,472],[603,473],[630,490],[653,497],[680,483],[703,497],[730,477],[757,478],[787,477],[817,485],[840,483],[875,493]];
const dea = [[309,484],[327,488],[350,482],[387,468],[410,475],[437,487],[460,494],[487,463],[510,448],[537,450],[570,463],[623,480],[653,495],[680,488],[707,493],[733,480],[757,480],[787,478],[817,483],[840,484],[875,490]];
const macdBars = [[310,0],[314,-4],[320,-6],[330,1],[345,8],[360,13],[375,9],[386,1],[392,-3],[410,-12],[430,-15],[445,-11],[455,-2],[462,3],[472,33],[480,37],[495,22],[510,6],[516,1],[520,-2],[540,-4],[560,-10],[575,-11],[590,-7],[610,-13],[630,-17],[640,-1],[650,5],[660,11],[668,-2],[690,-6],[708,-4],[714,1],[725,17],[735,5],[745,1],[780,1],[795,-1],[815,-5],[840,-6],[875,-8]];

const vLines = [308,327,345,373,402,430,458,487,516,544,573,602,629,658,687,715,743,772,800,828,857];
const dates = [['8/05',310],['8/08',327],['8/09',352],['8/10',381],['8/11',409],['8/12',437],['8/15',466],['8/16',495],['8/17',523],['8/18',552],['8/19',580],['8/22',609],['8/23',637],['8/24',665],['8/25',694],['8/26',722],['8/29',750],['8/30',779],['8/31',807],['9/01',836],['9/02',864],['14:00',885]];
const prices = [[2210,194],[2200,213],[2190,231],[2180,249],[2170,268],[2160,287],[2150,305],[2140,324],[2130,343],[2120,362],[2110,381],[2100,400],[2090,419]];

function interp(points, x) {
  if (x <= points[0][0]) return points[0][1];
  for (let i = 1; i < points.length; i++) {
    if (x <= points[i][0]) {
      const [x0, y0] = points[i - 1];
      const [x1, y1] = points[i];
      return y0 + (y1 - y0) * (x - x0) / (x1 - x0);
    }
  }
  return points[points.length - 1][1];
}

function smooth(points) {
  let d = `M${points[0][0]} ${points[0][1]}`;
  for (let i = 1; i < points.length - 1; i++) {
    const mx = (points[i][0] + points[i + 1][0]) / 2;
    const my = (points[i][1] + points[i + 1][1]) / 2;
    d += `Q${points[i][0]} ${points[i][1]} ${mx} ${my}`;
  }
  const last = points[points.length - 1];
  return d + `L${last[0]} ${last[1]}`;
}

// grid
out += '<g stroke="#3e090e" stroke-width="1" fill="none">';
vLines.forEach(x => { out += `<path d="M${x} 180V502"/>`; });
[248, 425, 502].forEach(y => { out += `<path d="M271 ${y}H907"/>`; });
out += '</g>';
out += '<path d="M307.500 180V502" stroke="#6a1616"/>';
out += '<rect x="271" y="433" width="636" height="13" fill="#130d0f" stroke="#3a0d12"/>';

// price axis
out += '<g font-family="Liberation Sans" font-size="8" fill="#7c2020" letter-spacing=".2">';
prices.forEach(([p, y]) => {
  out += `<text x="274" y="${y + 3}">${p}.00</text><path d="M304 ${y}h3" stroke="#7c2020"/>`;
});
[[20,447],[10,465],[0,484]].forEach(([p, y]) => {
  out += `<text x="301" y="${y + 3}" text-anchor="end" fill="#6e1c1c">${p}</text>`;
});
out += '</g>';

// candles
let prev = 370;
for (let i = 0, x = 310; x < 876; i++, x += 3.56) {
  const y = interp(closes, x) + Math.sin(i * 2.4) * 3 + Math.cos(i * 1.1) * 2;
  const top = Math.min(prev, y);
  const h = Math.max(Math.abs(prev - y), 1.5) + 3 * Math.abs(Math.sin(i * 0.7));
  const wick = 1 + 4.5 * Math.abs(Math.cos(i * 1.9));
  const down = y > prev;
  const color = down ? '#2cc3d6' : '#a8524a';
  const cx = x.toFixed(1);
  out += `<path d="M${cx} ${(top - wick).toFixed(1)}V${(top + h + wick * 0.7).toFixed(1)}" stroke="${color}" stroke-width=".8"/>`;
  if (down) {
    out += `<rect x="${(x - 1.4).toFixed(1)}" y="${top.toFixed(1)}" width="2.800" height="${h.toFixed(1)}" fill="${color}"/>`;
  } else {
    out += `<rect x="${(x - 1.2).toFixed(1)}" y="${top.toFixed(1)}" width="2.400" height="${h.toFixed(1)}" fill="#1a0606" stroke="${color}" stroke-width=".8"/>`;
  }
  prev = y;
}

// moving averages
[[maGreen,'#2f7466'],[maPink,'#b768b4'],[maYellow,'#c6b65a'],[maWhite,'#dcdcdc']].forEach(([pts, c]) => {
  out += `<path d="${smooth(pts)}" fill="none" stroke="${c}" stroke-width=".8"/>`;
});

// macd histogram and lines
for (let x = 312; x < 876; x += 3.56) {
  const v = interp(macdBars, x);
  if (Math.abs(v) < 0.5) continue;
  const c = v > 0 ? '#a2524c' : '#2c7a46';
  out += `<path d="M${x.toFixed(1)} 484v${(-v).toFixed(1)}" stroke="${c}" stroke-width="1"/>`;
}
out += `<path d="${smooth(dea)}" fill="none" stroke="#c6b65a" stroke-width=".9"/>`;
out += `<path d="${smooth(dif)}" fill="none" stroke="#e2dede" stroke-width=".9"/>`;
out += '<g font-family="Liberation Sans" font-size="8">'
  + '<text x="309" y="442" fill="#b8b8b8">MACD▾</text><text x="340" y="442" fill="#999">(26,12,9)</text>'
  + '<text x="375" y="442" fill="#d8d8d8">DIF=-4.675 <tspan fill="#31bccb">↓</tspan></text>'
  + '<text x="422" y="442" fill="#c9b84c">,DEA=-2.276 <tspan fill="#31bccb">↓</tspan></text>'
  + '<text x="476" y="442" fill="#b95cb5">,MACD=-4.798 <tspan fill="#31bccb">↓</tspan></text>'
  + '<text x="894" y="442" fill="#888">? ✕</text></g>';

// date axis
out += '<g font-family="Liberation Sans" font-size="7.500" fill="#b0b0b0">';
dates.forEach(([t, x]) => { out += `<text x="${x}" y="509">${t}</text>`; });
out += '<text x="272" y="509" fill="#777">30分钟 ▪</text></g>';

// hand drawn marks on the slide
out += '<g fill="none" stroke="#e8231c" stroke-width="2.800"><rect x="537" y="203" width="295" height="85"/><rect x="307" y="337" width="163" height="69"/></g>';
out += '<path d="M307 335h16v48h-16" fill="none" stroke="#2424e0" stroke-width="2"/>';
out += '<path d="M307 406L317 432 374 278 444 405 537 179 655 286 676 204 697 302 790 193" fill="none" stroke="#f7e64a" stroke-width="2.800" stroke-linejoin="miter"/>';
out += '<path d="M696 371V340" stroke="#f7e64a" stroke-width="2.400"/><path d="M690 343L696 333 702 343z" fill="#f7e64a"/>';

// wave numbers
out += '<g font-family="Liberation Serif" font-size="13" fill="#b4ad58">';
[['42',362,263],['45',640,319],['46',665,190],['47',690,326],['48',772,189]].forEach(([t, x, y]) => {
  out += `<text x="${x}" y="${y}">${t}</text><rect x="${x - 3}" y="${y + 1}" width="2" height="2" fill="#2a2a9a"/>`;
});
out += '</g>';
out += '<g font-family="Liberation Sans" font-size="8" fill="#a8a8a8"><text x="548" y="186">2218.29</text><text x="326" y="434">2083.98</text></g>';
out += '<path d="M540 181h7M318 431h7" stroke="#a8a8a8" stroke-width=".7"/>';

// annotation
out += '<g font-family="Noto Sans CJK TC" font-size="12" fill="#d8d048">'
  + '<text x="572" y="388" textLength="252">上涨线段中，47号点对45号点形成了击穿，但</text>'
  + '<text x="572" y="402" textLength="248">并未形成有效击穿，那么后续走势如果要形成</text>'
  + '<text x="572" y="417" textLength="225">有效击穿，是要击穿45号点还是47号点？</text></g>';

// cursor
out += '<path d="M591 266v9l2-2 2 4 1-1-2-3h3z" fill="#e8e8e8" stroke="#222" stroke-width=".4"/>';

art.innerHTML = out;
```
